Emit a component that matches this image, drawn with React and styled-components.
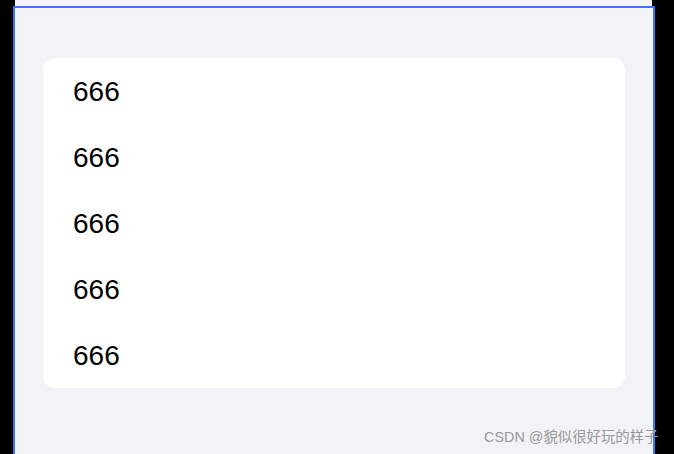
import React from 'react';
import styled, { createGlobalStyle } from 'styled-components';

const GlobalStyle = createGlobalStyle`
  html, body {
    margin: 0;
    padding: 0;
    background: #000;
    height: 100%;
    overflow: hidden;
  }
  body {
    font-family: "Liberation Sans", "Noto Sans CJK SC", sans-serif;
  }
`;

const Screen = styled.div`
  position: relative;
  width: 674px;
  height: 454px;
  overflow: hidden;
`;

const TopStrip = styled.div`
  height: 6px;
  margin: 0 22px 0 15px;
  background: #f2f2f7;
`;

const Frame = styled.div`
  margin-left: 13px;
  width: 642px;
  height: 460px;
  border: 2px solid #3478f6;
  border-bottom: none;
  background: #f2f2f7;
  padding: 50px 28px 0;
  box-sizing: border-box;
`;

const Card = styled.ul`
  list-style: none;
  margin: 0;
  padding: 0;
  background: #fff;
  border-radius: 12px;
  overflow: hidden;
`;

const Row = styled.li`
  height: 66px;
  box-sizing: border-box;
  padding: 2px 0 0 30px;
  display: flex;
  align-items: center;
  font-size: 28px;
  color: #000;
  line-height: 1;
`;

const Watermark = styled.div`
  position: absolute;
  left: 484px;
  top: 427px;
  font-size: 14.4px;
  line-height: 20px;
  color: #999;
  white-space: nowrap;
`;

const items = ['666', '666', '666', '666', '666'];

export default function App() {
  return (
    <>
      <GlobalStyle />
      <Screen>
        <TopStrip />
        <Frame>
          <Card>
            {items.map((t, i) => (
              <Row key={i}>{t}</Row>
            ))}
          </Card>
        </Frame>
        <Watermark>CSDN @貌似很好玩的样子</Watermark>
      </Screen>
    </>
  );
}
